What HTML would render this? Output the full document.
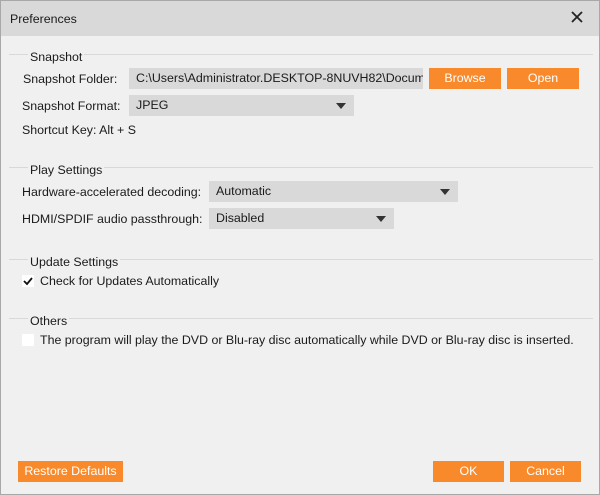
<!DOCTYPE html><html><head><style>
body{margin:0;width:600px;height:495px;overflow:hidden;font-family:"Liberation Sans",sans-serif;font-size:12.4px;color:#1a1a1a}
.win{position:absolute;left:0;top:0;width:598px;height:493px;border:1px solid #a8a8a8;background:#f0f0f0}
.tb{position:absolute;left:0;top:0;width:598px;height:35px;background:#d9d9d9}
.a{position:absolute;white-space:nowrap}
.ln{position:absolute;height:1px;background:#d8d8d8;left:8px;width:584px}
.f{position:absolute;background:#d9d9d9;height:21px;line-height:21px;padding-left:7px;box-sizing:border-box;overflow:hidden;white-space:nowrap}
.b{position:absolute;background:#f98a2c;color:#fff;height:21px;line-height:21px;text-align:center}
.ar{position:absolute;right:8px;top:8px;border-left:5px solid transparent;border-right:5px solid transparent;border-top:6px solid #333}
.cb{position:absolute;width:12px;height:12px;background:#fff}
</style></head><body><div class="win">
<div class="tb"></div>
<div class="a" style="left:9px;top:11px">Preferences</div>
<svg class="a" style="left:569px;top:9px" width="14" height="14"><path d="M2 2L12 12M12 2L2 12" stroke="#222" stroke-width="1.8"/></svg>
<div class="ln" style="top:53px"></div>
<div class="a" style="left:27px;top:49px;background:#f0f0f0;padding:0 2px">Snapshot</div>
<div class="a" style="left:22px;top:71px">Snapshot Folder:</div>
<div class="f" style="left:128px;top:67px;width:294px">C:\Users\Administrator.DESKTOP-8NUVH82\Documents</div>
<div class="b" style="left:428px;top:67px;width:72px">Browse</div>
<div class="b" style="left:506px;top:67px;width:72px">Open</div>
<div class="a" style="left:21px;top:98px">Snapshot Format:</div>
<div class="f" style="left:128px;top:94px;width:225px">JPEG<div class="ar"></div></div>
<div class="a" style="left:21px;top:122px">Shortcut Key: Alt + S</div>
<div class="ln" style="top:166px"></div>
<div class="a" style="left:27px;top:162px;background:#f0f0f0;padding:0 2px">Play Settings</div>
<div class="a" style="left:21px;top:184px">Hardware-accelerated decoding:</div>
<div class="f" style="left:208px;top:180px;width:249px">Automatic<div class="ar"></div></div>
<div class="a" style="left:21px;top:211px">HDMI/SPDIF audio passthrough:</div>
<div class="f" style="left:208px;top:207px;width:185px">Disabled<div class="ar"></div></div>
<div class="ln" style="top:258px"></div>
<div class="a" style="left:27px;top:254px;background:#f0f0f0;padding:0 2px">Update Settings</div>
<div class="cb" style="left:21px;top:274px"></div>
<svg class="a" style="left:21px;top:274px" width="12" height="12"><path d="M2 6L5 9L10 3" stroke="#111" stroke-width="1.8" fill="none"/></svg>
<div class="a" style="left:39px;top:273px">Check for Updates Automatically</div>
<div class="ln" style="top:317px"></div>
<div class="a" style="left:27px;top:313px;background:#f0f0f0;padding:0 2px">Others</div>
<div class="cb" style="left:21px;top:333px"></div>
<div class="a" style="left:39px;top:332px">The program will play the DVD or Blu-ray disc automatically while DVD or Blu-ray disc is inserted.</div>
<div class="b" style="left:17px;top:460px;width:105px">Restore Defaults</div>
<div class="b" style="left:432px;top:460px;width:71px">OK</div>
<div class="b" style="left:509px;top:460px;width:71px">Cancel</div>
</div></body></html>
